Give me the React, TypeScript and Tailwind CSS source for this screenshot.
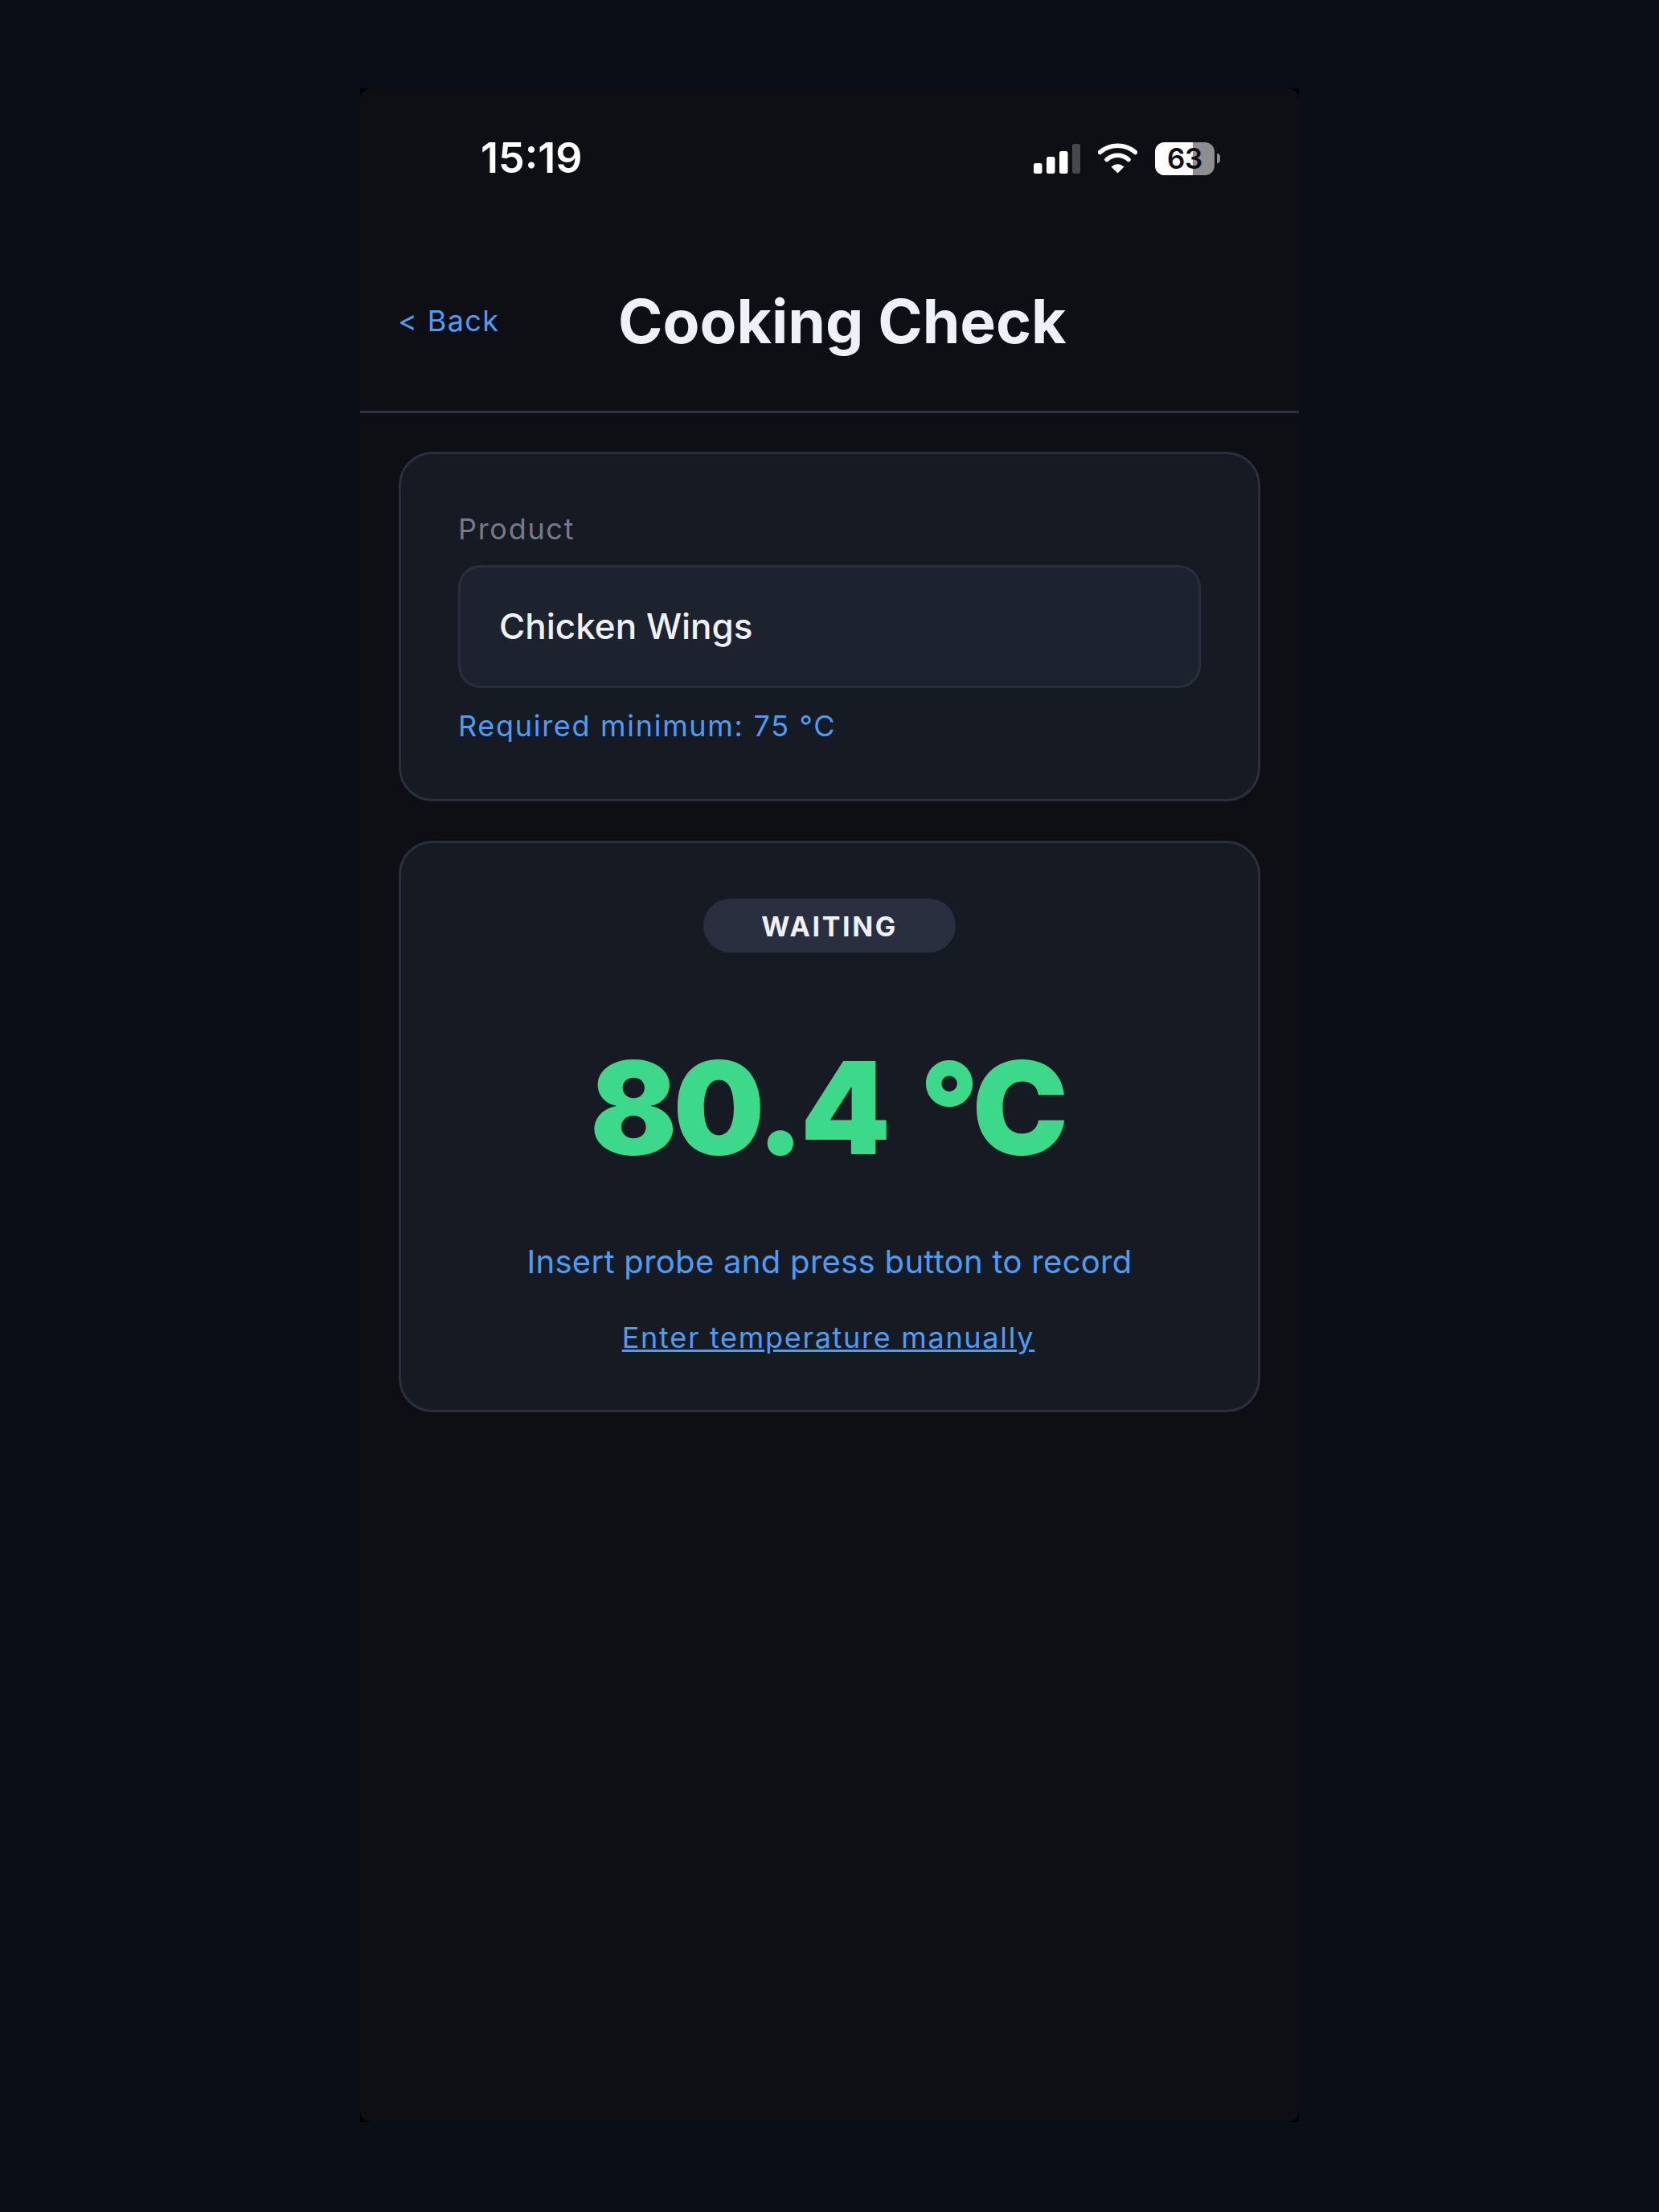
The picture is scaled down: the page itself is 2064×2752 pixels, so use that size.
const FONT = "font-['Inter','Noto_Sans',sans-serif]";

function StatusIcons() {
  return (
    <div className="flex items-center">
      <svg width="58" height="37" viewBox="0 0 58 37" className="mr-[22px]">
        <rect x="0" y="24" width="10.500" height="13" rx="2.500" fill="#fff" />
        <rect x="16" y="16" width="10.500" height="21" rx="2.500" fill="#fff" />
        <rect x="32" y="9" width="10.500" height="28" rx="2.500" fill="#fff" />
        <rect x="48" y="0" width="10" height="37" rx="2.500" fill="#47484c" />
      </svg>
      <svg width="49" height="38" viewBox="0 0 49 38" className="mr-[22px]">
        <path d="M2.500 11.500 C15 0.500 34 0.500 46.500 11.500" fill="none" stroke="#fff" strokeWidth="5.500" strokeLinecap="round" />
        <path d="M11 20.500 C19 13.500 30 13.500 38 20.500" fill="none" stroke="#fff" strokeWidth="5.500" strokeLinecap="round" />
        <path d="M16.500 29.500 C22 25 27 25 32.500 29.500 L24.500 37.500 Z" fill="#fff" />
      </svg>
      <div className="relative flex h-[41px] w-[74px] items-center justify-center overflow-hidden rounded-[12px] bg-[#8e8e90]">
        <div className="absolute inset-y-0 left-0 w-[47px] bg-white" />
        <span className="relative text-[35px] leading-none font-semibold tracking-[-0.3px] text-[#0d0e12]">63</span>
      </div>
      <div className="ml-[3px] h-[12px] w-[4px] rounded-r-full bg-[#8e8e90]" />
    </div>
  );
}

export default function App() {
  return (
    <div className={`${FONT} flex min-h-[2752px] justify-center bg-[#0a0e17] pt-[110px]`}>
      <div className="h-[2530px] w-[1168px] bg-black">
        <div className="flex h-full flex-col rounded-[14px] bg-[#0d0f14]">
          <div className="flex h-[170px] items-center justify-between pt-[4px] pr-[98px] pl-[150px]">
            <span className="text-[52px] leading-none font-semibold text-white">15:19</span>
            <StatusIcons />
          </div>
          <div className="flex h-[234px] items-center border-b-[3px] border-[#2d3140] pt-[7px] pl-[47px]">
            <span className="w-[274px] text-[36px] tracking-[1.4px] text-[#4d9df7]">&lt; Back</span>
            <h1 className="text-[75px] leading-none font-bold text-[#eef2f8]">Cooking Check</h1>
          </div>
          <div className="flex flex-col gap-[49px] px-[48px] pt-[48px]">
            <div className="h-[435px] rounded-[42px] border-[3px] border-[#2a2e3d] bg-[#161a23] px-[71px] pt-[71px]">
              <div className="text-[36px] leading-[44px] tracking-[1.7px] text-[#737b8c]">Product</div>
              <div className="mt-[23px] flex h-[153px] items-center rounded-[28px] border-[3px] border-[#2a2e3d] bg-[#1c222e] pb-[2px] pl-[48px] text-[44px] font-medium text-[#eef2f8]">
                Chicken Wings
              </div>
              <div className="mt-[25px] text-[36px] leading-[44px] tracking-[1.7px] text-[#4d9df7]">Required minimum: 75 °C</div>
            </div>
            <div className="flex h-[711px] flex-col items-center rounded-[42px] border-[3px] border-[#2a2e3d] bg-[#161a23] pt-[69px]">
              <div className="flex h-[67px] w-[314px] items-center justify-center rounded-full bg-[#2a2f3f] pt-[2px] text-[34px] font-bold tracking-[2.6px] text-[#eef2f8]">
                WAITING
              </div>
              <div className="mt-[113px] mr-[6px] text-[160px] leading-[160px] font-black tracking-[-5px] [word-spacing:14px] text-[#3dd98b]">80.4 °C</div>
              <div className="mt-[88px] text-[40px] leading-[48px] tracking-[0.3px] text-[#4d9df7]">Insert probe and press button to record</div>
              <div className="mt-[48px] mr-[3px] text-[36px] leading-[44px] tracking-[1.7px] text-[#4d9df7] underline">Enter temperature manually</div>
            </div>
          </div>
        </div>
      </div>
    </div>
  );
}
